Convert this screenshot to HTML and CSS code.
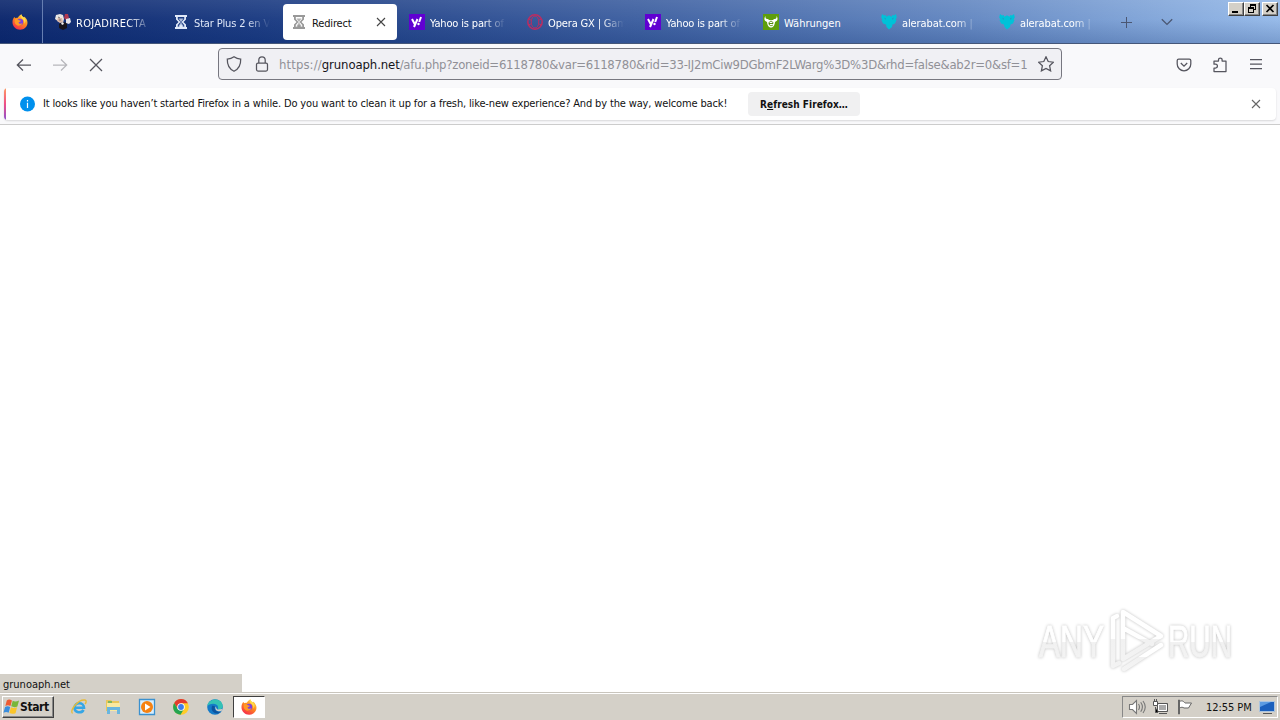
FILE: index.html
```html
<!DOCTYPE html>
<html lang="en">
<head>
<meta charset="utf-8">
<title>Redirect</title>
<link rel="stylesheet" href="styles.css">
</head>
<body>
<svg class="defs" width="0" height="0">
  <defs>
    <linearGradient id="flame" x1="0.8" y1="0" x2="0.2" y2="1"><stop offset="0" stop-color="#ffe14a"/><stop offset=".45" stop-color="#ff8a1e"/><stop offset="1" stop-color="#f5234f"/></linearGradient>
    <linearGradient id="silver" x1="0" y1="0" x2="0" y2="1"><stop offset="0" stop-color="#fff"/><stop offset=".5" stop-color="#fff"/><stop offset=".52" stop-color="#f1f1f1"/><stop offset="1" stop-color="#f4f4f4"/></linearGradient>
    <symbol id="firefox" viewBox="0 0 16 16">
      <path fill="url(#flame)" d="M2.300 3.100c.4.7.9 1 1.500 1.200.6-.5 1.400-.6 2-.5C6.500 2 8 1.300 9.300.2c.2 1.500 1.200 2.200 2.500 3.400.2-.4.200-.7.100-1C14.300 4 15.600 6.500 15.500 9c-.3 4-3.500 6.700-7.400 6.700C3.900 15.700.6 12.500.5 8.500.4 6.400 1.100 4.500 2.300 3.100z"/>
      <circle cx="8" cy="8" r="3.200" fill="#7b3fe0"/>
      <path fill="#ff9a24" d="M2.800 5.500c1.500-.8 3-.3 4.200.7l2 .5C8.600 8 7 7.800 6.500 8.500c.3 1.500 2.500 1.800 4 .6-1 3.500-7 3.500-7.800-.8z"/>
      <path fill="#ffdc4a" d="M9.300.2C8 2 9 3.600 10.700 5c1.300 1.200 2 2.800 1.600 4.800C14.500 7 13.500 5 11.800 3.600 10.500 2.400 9.500 1.700 9.300.2z"/>
    </symbol>
    <symbol id="glass" viewBox="0 0 16 16">
      <path fill="currentColor" d="M2 1h12v2h-1v2.500L10.500 8l2.500 2.500V13h1v2H2v-2h1v-2.500L5.500 8 3 5.500V3H2z"/>
      <path fill="var(--hole)" d="M4.800 3h6.400v2L9 7.500v1l2.200 2.500v2H10L8 10.500 6 13H4.800v-2L7 8.500v-1L4.800 5z"/>
      <path fill="currentColor" d="M5.500 4.500h5L8.500 7.200v2L11 12.800H5l2.500-3.600v-2z" opacity=".75"/>
    </symbol>
    <symbol id="deer" viewBox="0 0 16 16"><path fill="#00c2d8" d="M1 0l2 1.500L4.500 1l1 1.800L7.500 1.500h1l2 1.300 1-1.800 1.500.5L15 0l.8 3.500-1.300 2 1 .5-1.500 3.500-2.500 1-.5 2.500L8 15.500 5.500 13 5 10.500l-3-1L.5 6l1-.5L.2 3.500z"/><path fill="#4577ac" d="M3.500 3.500l1.500 1.500-1 .5zM12.500 3.500L11 5l1 .5z"/></symbol>
  </defs>
</svg>
<div class="window">
  <header class="tabbar">
    <div class="home"><svg width="16" height="16"><use href="#firefox"/></svg></div>
    <nav class="tabs">
      <div class="tab"><svg width="16" height="16" viewBox="0 0 16 16"><path fill="#e9e5e2" d="M1 1l4-1 3 1 1 4-1 4-4-1-4-3z"/><path fill="#b13a50" d="M10 0l3 0 1 4-3 2-2-2z"/><path fill="#d9b4a4" d="M3 4h4l1 4-3 1-3-2z"/><path fill="#18151c" d="M4 10l4-2 4 1 0 5-4 2-4-2z"/><path fill="#e8e6ea" d="M11 5l4-1 1 4-2 2-3-1z"/><path fill="#f3efef" d="M7 8l2 1-1 2-2-1z"/><path d="M3 3l2 1M4 6h2" stroke="#777"/></svg><span class="label roja">ROJADIRECTA</span></div>
      <div class="tab hour"><svg width="16" height="16"><use href="#glass"/></svg><span class="label">Star Plus 2 en V</span></div>
      <div class="tab active"><svg width="16" height="16"><use href="#glass"/></svg><span class="label">Redirect</span><svg class="close" width="10" height="10" viewBox="0 0 10 10"><path d="M1 1l8 8M9 1L1 9"/></svg></div>
      <div class="tab"><svg width="16" height="16" viewBox="0 0 16 16"><path fill="#6001d2" d="M0 0h16v16H0z"/><path d="M3 5l2.700 5M8.500 5L5 13M12 3l-1.800 5" stroke="#fff" stroke-width="2"/><circle cx="9.500" cy="10" r="1.200" fill="#fff"/></svg><span class="label">Yahoo is part of</span></div>
      <div class="tab"><svg width="16" height="16" viewBox="0 0 16 16" fill="none" stroke="#bc2c61"><circle cx="8" cy="8" r="7.200" stroke-width="1.500"/><ellipse cx="8" cy="8" rx="3.800" ry="6"/><path d="M1 5l3 1M1 11l3-1M12 6l3-1M12 10l3 1"/></svg><span class="label">Opera GX | Gam</span></div>
      <div class="tab"><svg width="16" height="16" viewBox="0 0 16 16"><path fill="#6001d2" d="M0 0h16v16H0z"/><path d="M3 5l2.700 5M8.500 5L5 13M12 3l-1.800 5" stroke="#fff" stroke-width="2"/><circle cx="9.500" cy="10" r="1.200" fill="#fff"/></svg><span class="label">Yahoo is part of</span></div>
      <div class="tab"><svg width="16" height="16" viewBox="0 0 16 16"><path fill="#5f9e0c" d="M0 0h16v16H0z"/><path fill="#fff" d="M2.500 2C2 4.500 3.500 5 5 5l1 1h4l1-1c1.500 0 3-.5 2.500-3 2 3 1 5-1.500 6-.5 4-2 5.500-4 5.500S4.500 12 4 8C1.500 7 .5 5 2.500 2z"/><path d="M6 9.500h4c0-3-4-3-4 0 0 2.500 2.500 2.500 3.800 1.600" fill="none" stroke="#528d0a"/></svg><span class="label plain">Währungen</span></div>
      <div class="tab"><svg width="16" height="16"><use href="#deer"/></svg><span class="label ale">alerabat.com |</span></div>
      <div class="tab"><svg width="16" height="16"><use href="#deer"/></svg><span class="label ale">alerabat.com |</span></div>
    </nav>
    <svg class="newtab" width="12" height="12" viewBox="0 0 12 12"><path d="M5.500 0v11M0 5.500h11"/></svg>
    <svg class="chev" width="12" height="8" viewBox="0 0 12 8"><path d="M.8 1.200L6 6.400l5.200-5.200"/></svg>
    <div class="controls">
      <i class="wbtn"><svg width="14" height="12"><path d="M3 8h6v2H3z"/></svg></i><i class="wbtn"><svg width="14" height="12"><path fill-rule="evenodd" d="M5 1h6v6H9v3H3V4h2zM6 3v1h3v2h1V3zM4 6v3h4V6z"/></svg></i><i class="wbtn last"><svg width="14" height="12"><path d="M3.500 2l7 7M10.500 2l-7 7" stroke="#000" stroke-width="1.700"/></svg></i>
    </div>
  </header>

  <div class="toolbar">
    <div class="navs">
      <svg width="16" height="16" viewBox="0 0 16 16"><path d="M15 8H1.500M7 2.500L1.300 8 7 13.500"/></svg>
      <svg class="dim" width="16" height="16" viewBox="0 0 16 16"><path d="M1 8h13.500M9 2.500l5.700 5.500L9 13.500"/></svg>
      <svg width="16" height="16" viewBox="0 0 16 16"><path d="M2 2l12 12M14 2L2 14"/></svg>
    </div>
    <div class="urlbar">
      <svg width="16" height="16" viewBox="0 0 16 16"><path d="M8 .8c2 1.500 4 2.200 6.700 2.300C14.900 9 13 13 8 15.300 3 13 1.100 9 1.300 3.100 4 3 6 2.300 8 .8z"/></svg>
      <svg width="16" height="16" viewBox="0 0 16 16"><rect x="2.500" y="7" width="11" height="8" rx="1.500"/><path d="M4.800 7V4a3.200 3.200 0 0 1 6.400 0v3"/></svg>
      <span class="url"><span class="scheme">https://</span><b>grunoaph.net</b><span class="rest">/afu.php?zoneid=6118780&amp;var=6118780&amp;rid=33-IJ2mCiw9DGbmF2LWarg%3D%3D&amp;rhd=false&amp;ab2r=0&amp;sf=1</span></span>
      <svg class="star" width="16" height="16" viewBox="0 0 16 16"><path d="M8 .8l2.200 4.700 5.200.7-3.800 3.500 1 5.200L8 12.400l-4.600 2.500 1-5.200L.6 6.200l5.200-.7z"/></svg>
    </div>
    <div class="tools">
      <svg width="16" height="16" viewBox="0 0 16 16"><path d="M2.700 2h10.600c1 0 1.500.5 1.500 1.500V7a6.800 6.800 0 0 1-13.600 0V3.500C1.200 2.500 1.700 2 2.700 2z"/><path d="M4.800 6L8 9.200 11.200 6"/></svg>
      <svg width="16" height="16" viewBox="0 0 16 16"><path d="M2 14.500V11h1.500a1.900 1.900 0 0 0 0-3.800H2V4h4.500V2.800a1.800 1.800 0 0 1 3.600 0V4H14v10.500z" stroke-linejoin="round"/></svg>
      <svg width="16" height="16" viewBox="0 0 16 16"><path d="M2 2.500h12M2 7h12M2 11.500h12"/></svg>
    </div>
  </div>

  <div class="notice-row">
    <div class="notice">
      <svg class="info" width="16" height="16" viewBox="0 0 16 16"><circle cx="8.500" cy="8" r="7.500" fill="#0090ed"/><path d="M8.500 6.700V12M8.500 4v1.400" stroke="#fff" stroke-width="1.200"/></svg>
      <span class="message">It looks like you haven’t started Firefox in a while. Do you want to clean it up for a fresh, like-new experience? And by the way, welcome back!</span>
      <button class="refresh"><span>R<u>e</u>fresh Firefox…</span></button>
      <svg class="dismiss" width="10" height="10" viewBox="0 0 10 10"><path d="M1 1l8 8M9 1L1 9"/></svg>
    </div>
  </div>

  <main class="page">
    <div class="status"><span>grunoaph.net</span></div>
    <svg class="watermark" width="216" height="76" viewBox="0 0 216 76">
      <g class="brand"><text x="8" y="52" textLength="65" lengthAdjust="spacingAndGlyphs">ANY</text><text x="137" y="52" textLength="64" lengthAdjust="spacingAndGlyphs">RUN</text>
      <g fill="none" stroke="url(#silver)" stroke-width="4.500" stroke-linejoin="round" stroke-linecap="round"><path d="M82 60V13l4-2M92 45V7l38 24-38 23V23l29 16"/><path d="M82 61l6-3M93 64l37-24"/></g></g>
    </svg>
  </main>

  <footer class="taskbar">
    <div class="start"><svg width="17" height="16" viewBox="0 0 18 16"><path fill="#ed5b32" d="M4 1c2-1.500 3.500-1 5.500 0L7.900 7c-2-1-3.500-1-5.400 0z"/><path fill="#79b63a" d="M10.300 1.500c2 1 4.200.8 6.700-.3L15.200 7.500c-2 1-4.500.8-6.500-.2z"/><path fill="#398ddd" d="M2.200 8c2-1.200 3.500-1 5.400 0L6 14c-2-1-3.500-1-5.500.2z"/><path fill="#fac52b" d="M8.400 8.300c2 1 4.300 1 6.500 0L13.300 14.500c-2 1-4.500 1-6.500-.1z"/></svg><span>Start</span></div>
    <div class="launch">
      <svg width="18" height="18" viewBox="0 0 18 18"><path d="M4.500 9.800h9.500c0-6-9.500-6-9.500 0 0 5 7 6 9 2" fill="none" stroke="#35a6e5" stroke-width="2.600"/><path d="M2.500 15.500C-1 13 8 1 15 2c2 .5 1 3 0 4" fill="none" stroke="#e7bb37" stroke-width="1.400"/></svg>
      <svg width="18" height="18" viewBox="0 0 18 18"><path fill="#e8c75b" d="M2 2h5l1 1h7v10H2z"/><path fill="#f8e9a1" d="M3 5h13v8H3z"/><path fill="#69b6df" d="M3 9h13v7h-3v-4H6v4H3z"/><path stroke="#5caf62" stroke-width="1.500" d="M4 4h4"/></svg>
      <svg width="18" height="18" viewBox="0 0 18 18"><path fill="#d8efff" stroke="#3b91cf" stroke-width="1.300" d="M1.500 1.500h15v15h-15z"/><circle cx="9" cy="9" r="6" fill="#f68212"/><path fill="#fff" d="M7 5.500l5.500 3.500L7 12.500z"/></svg>
      <svg width="18" height="18" viewBox="0 0 18 18"><circle cx="9" cy="9" r="7.800" fill="#ffcc28"/><path fill="#e23b2f" d="M2.200 5A7.800 7.800 0 0 1 15.900 5.300H9L6 11z"/><path fill="#24a451" d="M2.200 5A7.800 7.800 0 0 0 8.500 16.800l3.300-5.500H6z"/><circle cx="9" cy="9" r="3.800" fill="#fff"/><circle cx="9" cy="9" r="2.900" fill="#3c7deb"/></svg>
      <svg width="18" height="18" viewBox="0 0 18 18"><circle cx="9" cy="9" r="7.800" fill="#147ac8"/><path fill="#34c2b5" d="M1.300 8C2.500-.5 16-1 16.800 8c0 3-3 4-5 3 2-5-6-7-10.500-3z"/><path fill="#0d539e" d="M6.500 7.500C4 11 7 16 12 15.500l3.500-2c-4 1-8-1-6.500-5z"/><path fill="#d4d0c8" d="M9.500 8.500c1 1 .5 2 2 3l5-.5-1 2c-3 1-7 0-6-4.500z"/></svg>
    </div>
    <div class="current"><svg width="16" height="16"><use href="#firefox"/></svg></div>
    <div class="tray">
      <svg width="18" height="16" viewBox="0 0 18 16" fill="#fff" stroke="#777" stroke-width="1.100"><path d="M1.500 5.500h3l4-4v13l-4-4h-3z"/><path fill="none" d="M10.500 5q2 3 0 6M12.700 3.300q3.400 4.700 0 9.400M15 2q4.500 6 0 12"/></svg>
      <svg width="18" height="16" viewBox="0 0 18 16"><path fill="#aaa" stroke="#555" d="M5.500 4.500h10v8h-10z"/><path fill="none" stroke="#fff" d="M6.500 5.500h8v6h-8z"/><path stroke="#555" d="M7 14.500h8M3.500 8v5.500H6"/><path fill="#fff" stroke="#555" d="M1.500 2.500h4v4h-4zM2.500 0v2M4.500 0v2"/></svg>
      <svg width="18" height="16" viewBox="0 0 18 16" fill="#fff" stroke="#666"><path d="M3.500 2.500c3-1.500 4 0 5.500 1.500h6.500l-3 5H8C6.500 8 5.500 8 3.500 9z"/><path d="M2.500 1v14h1V1z"/></svg>
      <span class="clock">12:55 PM</span>
      <svg width="18" height="16" viewBox="0 0 18 16"><path fill="#1b60bd" stroke="#abc4df" d="M1.500 2.500h15v10h-15z"/><path fill="#5b9be2" d="M2 3h11L2 8z"/><path stroke="#555" d="M5 14.500h9"/></svg>
    </div>
  </footer>
</div>
</body>
</html>
```
FILE: styles.css
```css
* { box-sizing: border-box; }
body { margin: 0; font: 11px/14px "DejaVu Sans Condensed", "DejaVu Sans", sans-serif; font-stretch: condensed; color: #111; overflow: hidden; }
svg { flex: none; display: block; }
.defs { position: absolute; }
.window { width: 1280px; height: 720px; display: flex; flex-direction: column; background: #fff; }
.tabbar { height: 44px; display: flex; position: relative; flex: none; background: linear-gradient(180deg, #ffffff18 0, #ffffff05 45%, #00206030 100%), linear-gradient(90deg, #0c276d, #1b3b82 20%, #3e60a1 50%, #6387c1 75%, #96bae9 100%); border-bottom: 1px solid #455779; }
.home { width: 43px; padding: 14px 0 0 12px; border-right: 1px solid #667eb1; }
.tabs { display: flex; padding: 4px 0 0 2px; }
.tab { width: 114px; height: 36px; margin-right: 4px; padding-left: 10px; display: flex; align-items: center; color: #fff; border-radius: 4px; }
.tab .label { width: 76px; margin-left: 5px; white-space: nowrap; overflow: hidden; padding-top: 3px; letter-spacing: -0.15px; -webkit-mask-image: linear-gradient(90deg, #000 70%, transparent 100%); }
.tab .roja { letter-spacing: 0.3px; }
.tab .ale { letter-spacing: -0.1px; }
.tab .plain { -webkit-mask-image: none; letter-spacing: 0; }
.hour { color: #e0e8f8; --hole: #1b3b82; }
.active { background: #fff; color: #111; width: 114px; margin-left: 2px; margin-right: 2px; padding-left: 8px; --hole: #fff; }
.active > svg:first-child { color: #999; }
.tab.active .label { width: 59px; -webkit-mask-image: none; }
.close, .dismiss { stroke: #444; stroke-width: 1.1; }
.dismiss { stroke: #666; }
.active .close { margin-left: 5px; }
.newtab { margin: 17px 0 0 14px; stroke: #4b5772; }
.chev { margin: 18px 0 0 28px; fill: none; stroke: #4b5772; stroke-width: 1.3; }
.controls { display: flex; margin: 2px 2px 0 auto; }
.wbtn { width: 16px; height: 14px; background: #d4d0c8; border: 1px solid; border-color: #fff #404040 #404040 #fff; box-shadow: inset -1px -1px #888; }
.wbtn.last { margin-left: 2px; }
.toolbar { height: 44px; flex: none; display: flex; align-items: center; background: #f9f9fb; padding: 0 16px; }
.toolbar svg { fill: none; stroke: #55555e; stroke-width: 1.25; }
.navs { display: flex; gap: 20px; width: 202px; padding-bottom: 2px; }
.toolbar .dim { opacity: .4; }
.urlbar { width: 844px; height: 32px; margin-top: -4px; border: 1px solid #777780; border-radius: 4px; background: #f0f0f4; display: flex; align-items: center; padding: 0 7px; gap: 12px; }
.url { flex: 1; min-width: 0; white-space: nowrap; font: 13px/18px "DejaVu Sans Condensed", sans-serif; font-stretch: condensed; color: #909097; margin-left: -3px; padding-top: 1px; letter-spacing: -0.225px; }
.url .scheme { letter-spacing: 0.1px; }
.url b { color: #15141a; font-weight: 400; letter-spacing: -0.1px; }
.url .rest { letter-spacing: -0.25px; }
.tools { display: flex; gap: 20px; margin-left: auto; padding-bottom: 2px; }
.notice-row { height: 37px; flex: none; background: #f9f9fb; border-bottom: 1px solid #ccc; padding: 0 4px; }
.notice { height: 32px; background: linear-gradient(180deg, #ff9a62, #ef4e86 50%, #8b50ce) left / 2px 100% no-repeat, #fff; border-radius: 4px; display: flex; align-items: center; padding: 0 15px; box-shadow: 0 1px 2px #0002; }
.message { width: 705px; margin-left: 8px; white-space: nowrap; letter-spacing: -0.147px; }
.refresh { width: 112px; height: 24px; border: 0; border-radius: 4px; background: #f0f0f1; font: bold 10px/14px "DejaVu Sans Condensed", sans-serif; color: #111; padding: 1px 0 0; white-space: nowrap; letter-spacing: 0.05px; }
.dismiss { margin-left: auto; }
.page { flex: 1; position: relative; background: #fff; }
.status { position: absolute; left: 0; bottom: 0; width: 242px; height: 18px; padding: 4px 3px 0; background: #d4d0c8; }
.watermark { position: absolute; right: 33px; bottom: 11px; }
.brand { filter: drop-shadow(0 0 1.500px #c0c0c0); }
.brand text { font: 45px "Liberation Sans Narrow", "Liberation Sans", sans-serif; fill: url(#silver); stroke: url(#silver); stroke-width: 1px; }
.taskbar { height: 28px; flex: none; background: #d4d0c8; border-top: 1px solid #c9c5bd; box-shadow: inset 0 1px #fff; display: flex; align-items: center; padding: 2px 2px 1px; }
.start { width: 52px; height: 22px; border: 1px solid; border-color: #fff #404040 #404040 #fff; box-shadow: inset -1px -1px #888; font-weight: bold; font-size: 12px; display: flex; align-items: center; white-space: nowrap; }
.start span { letter-spacing: -0.4px; }
.launch { display: flex; gap: 16px; margin-left: 16px; }
.current { width: 32px; height: 22px; margin-left: 9px; border: 1px solid; border-color: #404040 #fff #fff #404040; background: #fff; padding: 2px 7px; }
.tray { margin-left: auto; width: 156px; height: 22px; border: 1px solid; border-color: #888 #fff #fff #888; display: flex; align-items: center; gap: 6px; padding-left: 5px; }
.clock { width: 46px; margin-left: 6px; padding-top: 1px; white-space: nowrap; letter-spacing: -0.05px; }
```
